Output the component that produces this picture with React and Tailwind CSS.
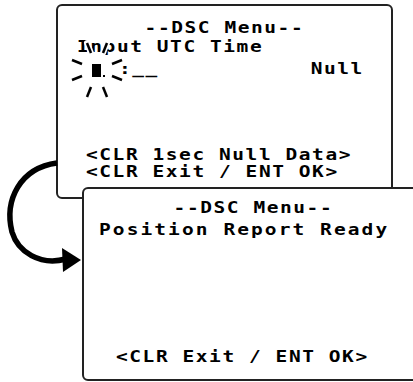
import React from 'react';

const rays = [
  [72, 60, 82, 64],
  [72, 80, 82, 76],
  [112, 64, 122, 60],
  [112, 76, 122, 80],
  [87, 97, 91, 87],
  [103, 87, 107, 97],
  [87, 43, 91, 53],
  [103, 53, 107, 43],
];

const lcd = "font-['DejaVu_Sans_Mono',monospace] font-bold text-[15px] leading-[15px] tracking-[1.2px] text-black whitespace-pre";

// LCD glyphs are wider than DejaVu's, so stretch each text run sideways
function Wide({ children, origin = 'origin-left', className = '' }) {
  return <span className={`inline-block scale-x-[1.3] ${origin} ${className}`}>{children}</span>;
}

export default function App() {
  return (
    <div className="relative w-[413px] h-[382px] overflow-hidden bg-white">
      {/* first screen */}
      <div className={`ml-[56px] mt-[4px] w-[337px] h-[195px] border-2 border-[#222] rounded-[6px] flex flex-col ${lcd}`}>
        <div className="pt-[15px] text-center"><Wide origin="origin-center">--DSC Menu--</Wide></div>
        <div className="mt-[4px] pl-[19px]"><Wide>Input UTC Time</Wide></div>
        <div className="mt-[7px] h-[15px] flex items-start">
          <div className="ml-[34px] mt-[2px] w-[9px] h-[13px] bg-black" />
          <div className="ml-[2px] mt-[13px] w-[2px] h-[2px] bg-black" />
          <div className="ml-[14px]"><Wide>:__</Wide></div>
          <div className="ml-auto mr-[27px]"><Wide origin="origin-right">Null</Wide></div>
        </div>
        <div className="mt-auto pl-[28px]"><Wide>&lt;CLR 1sec Null Data&gt;</Wide></div>
        <div className="mt-[2px] pb-[17px] pl-[28px]"><Wide>&lt;CLR Exit / ENT OK&gt;</Wide></div>
      </div>

      {/* blinking cursor rays */}
      <svg className="absolute left-[60px] top-[38px]" width="70" height="65" viewBox="60 38 70 65">
        {rays.map(([x1, y1, x2, y2], i) => (
          <line key={'w' + i} x1={x1} y1={y1} x2={x2} y2={y2} stroke="#fff" strokeWidth="6" strokeLinecap="round" />
        ))}
        {rays.map(([x1, y1, x2, y2], i) => (
          <line key={'b' + i} x1={x1} y1={y1} x2={x2} y2={y2} stroke="#000" strokeWidth="2.5" />
        ))}
      </svg>

      {/* arrow between screens */}
      <svg className="absolute left-0 top-[150px]" width="90" height="130" viewBox="0 150 90 130">
        <path d="M57 163 C20 168 4 200 12 232 C18 252 40 266 66 259" fill="none" stroke="#000" strokeWidth="5.5" />
        <polygon points="62,248 81,260 63,272" fill="#000" />
      </svg>

      {/* second screen */}
      <div className={`relative -mt-[12px] ml-[82px] w-[342px] h-[194px] bg-white border-2 border-[#222] rounded-[6px] flex flex-col ${lcd}`}>
        <div className="pt-[12px] text-center"><Wide origin="origin-center">--DSC Menu--</Wide></div>
        <div className="mt-[7px] pl-[15px]"><Wide className="tracking-[1.6px]">Position Report Ready</Wide></div>
        <div className="mt-auto pb-[14px] pl-[32px]"><Wide>&lt;CLR Exit / ENT OK&gt;</Wide></div>
      </div>
    </div>
  );
}
